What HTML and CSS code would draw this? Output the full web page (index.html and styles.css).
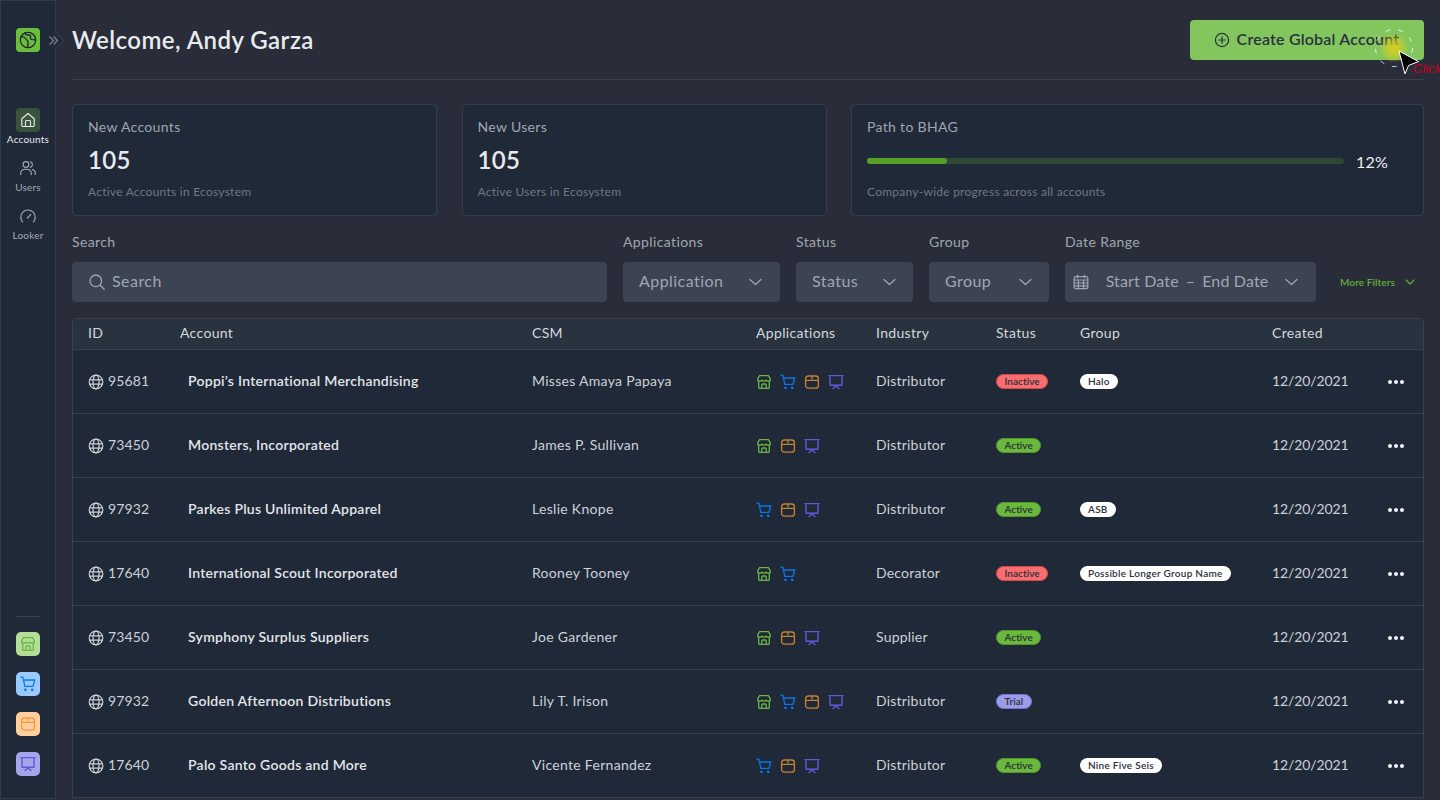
FILE: index.html
```html
<!DOCTYPE html>
<html lang="en">
<head>
<meta charset="utf-8">
<title>Accounts</title>
<link rel="stylesheet" href="styles.css">
</head>
<body>
<svg class="defs" width="0" height="0" aria-hidden="true">
  <defs>
    <symbol id="store" viewBox="0 0 16 16" fill="none" stroke="currentColor" stroke-width="1.3" stroke-linejoin="round" stroke-linecap="round">
      <path d="M3.5 1.6h9l2 3.6c0 1.3-1 2-2.2 2-.9 0-1.7-.4-2.1-1.1-.4.7-1.2 1.1-2.2 1.1s-1.800-.4-2.200-1.100C5.400 6.800 4.600 7.200 3.700 7.200 2.500 7.200 1.500 6.500 1.500 5.200z"/>
      <path d="M2.700 7.200v6.200c0 .6.400 1 1 1h8.600c.6 0 1-.4 1-1V7.200"/>
      <path d="M5.800 14.400v-3.400c0-.6.400-1 1-1h2.400c.6 0 1 .4 1 1v3.400"/>
    </symbol>
    <symbol id="cart" viewBox="0 0 16 16" fill="none" stroke="currentColor" stroke-width="1.3" stroke-linejoin="round" stroke-linecap="round">
      <path d="M.8 1.200h2l2.100 9.200h8.100l1.800-6.400H3.500"/>
      <circle cx="5.400" cy="13.800" r=".7" fill="currentColor"/>
      <circle cx="12.200" cy="13.800" r=".7" fill="currentColor"/>
    </symbol>
    <symbol id="box" viewBox="0 0 16 16" fill="none" stroke="currentColor" stroke-width="1.300" stroke-linejoin="round" stroke-linecap="round">
      <rect x="1.600" y="2" width="12.800" height="12.200" rx="2.800"/>
      <path d="M1.600 6.400h12.800M8 2.400v2.400" />
    </symbol>
    <symbol id="board" viewBox="0 0 16 16" fill="none" stroke="currentColor" stroke-width="1.400" stroke-linejoin="round" stroke-linecap="round">
      <path d="M1 1.600h14M2 1.600v9.600h12V1.600"/>
      <path d="M8 11.200v1M8 12.200l-3 2.200M8 12.200l3 2.200"/>
    </symbol>
    <symbol id="globe" viewBox="0 0 16 16" fill="none" stroke="currentColor" stroke-width="1.200">
      <circle cx="8" cy="8" r="6.800"/>
      <ellipse cx="8" cy="8" rx="3" ry="6.800"/>
      <path d="M1.400 5.800h13.200M1.400 10.200h13.200"/>
    </symbol>
  </defs>
</svg>

<div class="app">
  <aside class="sidebar">
    <div class="logo">
      <svg viewBox="0 0 24 24" width="20" height="20" fill="none" stroke="#1f2937" stroke-width="1.600" stroke-linejoin="round" stroke-linecap="round">
        <circle cx="12" cy="12" r="9.200"/>
        <path d="M3.800 8c2.400-.3 4.200.6 5.200 2.200s2.800 1.800 3 3.800-.4 3.500 0 7.200"/>
        <path d="M8.500 3.600c.4 1.800 2 2.600 3.800 2.400s2.700.2 2.900 1.600-1 2-.2 3 2 1 5.800 1.200"/>
      </svg>
    </div>
    <nav class="nav">
      <a class="nav-item is-active">
        <span class="nav-icon">
          <svg viewBox="0 0 16 16" width="16" height="16" fill="none" stroke="currentColor" stroke-width="1.200" stroke-linejoin="round"><path d="M1.800 6.800 8 1.500l6.200 5.300v6.500c0 .7-.5 1.200-1.200 1.200H3c-.7 0-1.200-.5-1.200-1.200z"/><path d="M5.500 14.500V9.500c0-.6.400-1 1-1h3c.6 0 1 .4 1 1v5"/></svg>
        </span>
        <span class="nav-label">Accounts</span>
      </a>
      <a class="nav-item">
        <span class="nav-icon">
          <svg viewBox="0 0 16 16" width="16" height="16" fill="none" stroke="currentColor" stroke-width="1.100" stroke-linecap="round"><circle cx="6" cy="4.500" r="2.900"/><path d="M.8 14.500v-1.500c0-2.300 2-3.800 5.200-3.800s5.200 1.500 5.200 3.800v1.500M10.300 1.800c1.300.3 2.100 1.400 2.100 2.700s-.8 2.400-2.100 2.700M12.500 9.500c1.700.5 2.700 1.800 2.700 3.500v1.500"/></svg>
        </span>
        <span class="nav-label">Users</span>
      </a>
      <a class="nav-item">
        <span class="nav-icon">
          <svg viewBox="0 0 16 16" width="16" height="16" fill="none" stroke="currentColor" stroke-width="1.200" stroke-linecap="round"><path d="M2.600 13.800C1.400 12.500.8 10.900.8 9.200A7.200 7.200 0 0 1 8 2a7.200 7.200 0 0 1 7.200 7.200c0 1.700-.6 3.300-1.800 4.600"/><path d="M7.400 10 10.800 6.400"/></svg>
        </span>
        <span class="nav-label">Looker</span>
      </a>
    </nav>
    <div class="side-apps">
      <span class="app-tile tile-green"><svg width="16" height="16"><use href="#store"/></svg></span>
      <span class="app-tile tile-blue"><svg width="16" height="16"><use href="#cart"/></svg></span>
      <span class="app-tile tile-orange"><svg width="16" height="16"><use href="#box"/></svg></span>
      <span class="app-tile tile-purple"><svg width="16" height="16"><use href="#board"/></svg></span>
    </div>
    <svg class="collapse" width="18" height="18" viewBox="0 0 18 18" fill="none">
      <path d="M7.500 0 15.500 8.500 7.500 17" fill="#1f2937" stroke="#39414f"/>
      <path d="M1.500 4.500 5.500 8.500 1.500 12.500M5.500 4.500 9.500 8.500 5.500 12.500" stroke="#76808f" stroke-width="1.300"/>
    </svg>
  </aside>

  <main class="main">
    <header class="topbar">
      <h1 class="title">Welcome, Andy Garza</h1>
      <button class="create-btn" type="button">
        <svg width="16" height="16" viewBox="0 0 16 16" fill="none" stroke="currentColor" stroke-width="1.200" stroke-linecap="round"><circle cx="8" cy="8" r="6.600"/><path d="M8 4.800v6.400M4.800 8h6.400"/></svg>
        Create Global Account
      </button>
    </header>

    <section class="stats">
      <div class="card">
        <div class="card-title">New Accounts</div>
        <div class="card-num">105</div>
        <div class="card-sub">Active Accounts in Ecosystem</div>
      </div>
      <div class="card">
        <div class="card-title">New Users</div>
        <div class="card-num">105</div>
        <div class="card-sub">Active Users in Ecosystem</div>
      </div>
      <div class="card">
        <div class="card-title">Path to BHAG</div>
        <div class="progress-row">
          <div class="progress"><div class="progress-fill"></div></div>
          <span class="progress-val">12%</span>
        </div>
        <div class="card-sub">Company-wide progress across all accounts</div>
      </div>
    </section>

    <section class="filters">
      <div class="field field-search">
        <label class="field-label">Search</label>
        <div class="control">
          <svg class="search-ic" width="18" height="18" viewBox="0 0 18 18" fill="none" stroke="currentColor" stroke-width="1.300" stroke-linecap="round"><circle cx="7.800" cy="7.800" r="5.800"/><path d="m12.200 12.200 4 4"/></svg>
          <span>Search</span>
        </div>
      </div>
      <div class="field field-app">
        <label class="field-label">Applications</label>
        <div class="control between"><span>Application</span><svg class="chev" width="14" height="14" viewBox="0 0 14 14" fill="none" stroke="currentColor" stroke-width="1.300" stroke-linecap="round" stroke-linejoin="round"><path d="m1 4.500 5.500 5 5.500-5"/></svg></div>
      </div>
      <div class="field field-status">
        <label class="field-label">Status</label>
        <div class="control between"><span>Status</span><svg class="chev" width="14" height="14" viewBox="0 0 14 14" fill="none" stroke="currentColor" stroke-width="1.300" stroke-linecap="round" stroke-linejoin="round"><path d="m1 4.500 5.500 5 5.500-5"/></svg></div>
      </div>
      <div class="field field-group">
        <label class="field-label">Group</label>
        <div class="control between"><span>Group</span><svg class="chev" width="14" height="14" viewBox="0 0 14 14" fill="none" stroke="currentColor" stroke-width="1.300" stroke-linecap="round" stroke-linejoin="round"><path d="m1 4.500 5.500 5 5.500-5"/></svg></div>
      </div>
      <div class="field field-date">
        <label class="field-label">Date Range</label>
        <div class="control between">
          <svg width="16" height="16" viewBox="0 0 16 16" fill="none" stroke="currentColor" stroke-width="1.200" stroke-linecap="round"><rect x="1.200" y="2.600" width="13.600" height="12" rx="1.600"/><path d="M1.200 6h13.600M4.600 1v2.800M11.400 1v2.800M1.200 9h13.600M1.200 11.800h13.600M5.400 6v8.600M10.600 6v8.600"/></svg>
          <span class="date-text">Start Date<i class="dash">–</i>End Date</span>
          <svg class="chev" width="14" height="14" viewBox="0 0 14 14" fill="none" stroke="currentColor" stroke-width="1.300" stroke-linecap="round" stroke-linejoin="round"><path d="m1 4.500 5.500 5 5.500-5"/></svg>
        </div>
      </div>
      <div class="more">More Filters
        <svg width="10" height="10" viewBox="0 0 10 10" fill="none" stroke="currentColor" stroke-width="1.100" stroke-linecap="round" stroke-linejoin="round"><path d="m1 3 4 4 4-4"/></svg>
      </div>
    </section>

    <section class="table">
      <div class="row head">
        <div>ID</div><div>Account</div><div>CSM</div><div>Applications</div><div>Industry</div><div>Status</div><div>Group</div><div>Created</div><div></div>
      </div>

      <div class="row">
        <div class="id"><svg width="16" height="16"><use href="#globe"/></svg>95681</div>
        <div class="acct">Poppi’s International Merchandising</div>
        <div>Misses Amaya Papaya</div>
        <div class="apps"><svg class="c-store"><use href="#store"/></svg><svg class="c-cart"><use href="#cart"/></svg><svg class="c-box"><use href="#box"/></svg><svg class="c-board"><use href="#board"/></svg></div>
        <div class="ind">Distributor</div>
        <div><span class="pill inactive">Inactive</span></div>
        <div><span class="tag">Halo</span></div>
        <div class="date">12/20/2021</div>
        <div class="dots"><i></i><i></i><i></i></div>
      </div>

      <div class="row">
        <div class="id"><svg width="16" height="16"><use href="#globe"/></svg>73450</div>
        <div class="acct">Monsters, Incorporated</div>
        <div>James P. Sullivan</div>
        <div class="apps"><svg class="c-store"><use href="#store"/></svg><svg class="c-box"><use href="#box"/></svg><svg class="c-board"><use href="#board"/></svg></div>
        <div class="ind">Distributor</div>
        <div><span class="pill active">Active</span></div>
        <div></div>
        <div class="date">12/20/2021</div>
        <div class="dots"><i></i><i></i><i></i></div>
      </div>

      <div class="row">
        <div class="id"><svg width="16" height="16"><use href="#globe"/></svg>97932</div>
        <div class="acct">Parkes Plus Unlimited Apparel</div>
        <div>Leslie Knope</div>
        <div class="apps"><svg class="c-cart"><use href="#cart"/></svg><svg class="c-box"><use href="#box"/></svg><svg class="c-board"><use href="#board"/></svg></div>
        <div class="ind">Distributor</div>
        <div><span class="pill active">Active</span></div>
        <div><span class="tag">ASB</span></div>
        <div class="date">12/20/2021</div>
        <div class="dots"><i></i><i></i><i></i></div>
      </div>

      <div class="row">
        <div class="id"><svg width="16" height="16"><use href="#globe"/></svg>17640</div>
        <div class="acct">International Scout Incorporated</div>
        <div>Rooney Tooney</div>
        <div class="apps"><svg class="c-store"><use href="#store"/></svg><svg class="c-cart"><use href="#cart"/></svg></div>
        <div class="ind">Decorator</div>
        <div><span class="pill inactive">Inactive</span></div>
        <div><span class="tag">Possible Longer Group Name</span></div>
        <div class="date">12/20/2021</div>
        <div class="dots"><i></i><i></i><i></i></div>
      </div>

      <div class="row">
        <div class="id"><svg width="16" height="16"><use href="#globe"/></svg>73450</div>
        <div class="acct">Symphony Surplus Suppliers</div>
        <div>Joe Gardener</div>
        <div class="apps"><svg class="c-store"><use href="#store"/></svg><svg class="c-box"><use href="#box"/></svg><svg class="c-board"><use href="#board"/></svg></div>
        <div class="ind">Supplier</div>
        <div><span class="pill active">Active</span></div>
        <div></div>
        <div class="date">12/20/2021</div>
        <div class="dots"><i></i><i></i><i></i></div>
      </div>

      <div class="row">
        <div class="id"><svg width="16" height="16"><use href="#globe"/></svg>97932</div>
        <div class="acct">Golden Afternoon Distributions</div>
        <div>Lily T. Irison</div>
        <div class="apps"><svg class="c-store"><use href="#store"/></svg><svg class="c-cart"><use href="#cart"/></svg><svg class="c-box"><use href="#box"/></svg><svg class="c-board"><use href="#board"/></svg></div>
        <div class="ind">Distributor</div>
        <div><span class="pill trial">Trial</span></div>
        <div></div>
        <div class="date">12/20/2021</div>
        <div class="dots"><i></i><i></i><i></i></div>
      </div>

      <div class="row">
        <div class="id"><svg width="16" height="16"><use href="#globe"/></svg>17640</div>
        <div class="acct">Palo Santo Goods and More</div>
        <div>Vicente Fernandez</div>
        <div class="apps"><svg class="c-cart"><use href="#cart"/></svg><svg class="c-box"><use href="#box"/></svg><svg class="c-board"><use href="#board"/></svg></div>
        <div class="ind">Distributor</div>
        <div><span class="pill active">Active</span></div>
        <div><span class="tag">Nine Five Seis</span></div>
        <div class="date">12/20/2021</div>
        <div class="dots"><i></i><i></i><i></i></div>
      </div>
    </section>
  </main>

  <div class="click-mark">
    <svg class="halo" width="40" height="40" viewBox="0 0 40 40" fill="none">
      <defs><radialGradient id="glow"><stop offset="0" stop-color="#dccf1e" stop-opacity=".95"/><stop offset=".5" stop-color="#dccf1e" stop-opacity=".6"/><stop offset="1" stop-color="#dccf1e" stop-opacity="0"/></radialGradient></defs>
      <circle cx="20" cy="20" r="15" fill="url(#glow)"/>
      <circle cx="20" cy="20" r="18.500" stroke="#fff" stroke-opacity=".75" stroke-dasharray="5 8"/>
    </svg>
    <svg class="arrow" width="24" height="28" viewBox="0 0 24 28"><path d="M2 1 8 24l3.500-8.500L21.500 11.500z" fill="#000" stroke="#fff" stroke-width="1"/></svg>
    <span class="click-text">Click</span>
  </div>
</div>
</body>
</html>
```

FILE: styles.css
```css
* { box-sizing: border-box; }
html, body { margin: 0; height: 100%; }
body {
  width: 1440px;
  height: 800px;
  overflow: hidden;
  background: #282d39;
  color: #d4d8de;
  font-family: "Lato", "Liberation Sans", sans-serif;
  font-size: 14px;
}
.defs { position: absolute; }
.app { display: flex; position: relative; height: 800px; overflow: hidden; }

/* sidebar */
.sidebar {
  position: relative;
  flex: 0 0 56px;
  height: 799px;
  background: #1f2937;
  border: 1px solid #333a48;
  display: flex;
  flex-direction: column;
  align-items: center;
  padding-top: 27px;
}
.logo {
  width: 24px; height: 24px;
  border-radius: 4px;
  background: #6cbd3c;
  display: flex; align-items: center; justify-content: center;
}
.nav { display: flex; flex-direction: column; align-items: center; margin-top: 56px; gap: 4px; }
.nav-item { display: flex; flex-direction: column; align-items: center; width: 54px; height: 44px; color: #a4abb7; }
.nav-icon { width: 24px; height: 24px; border-radius: 4px; display: flex; align-items: center; justify-content: center; }
.nav-label { font-size: 10px; line-height: 14px; letter-spacing: .2px; }
.is-active { color: #e6e8ec; }
.is-active .nav-icon { background: #39533c; }
.side-apps {
  margin-top: auto;
  margin-bottom: 22px;
  padding-top: 16px;
  display: flex; flex-direction: column; gap: 16px;
  position: relative;
}
.side-apps::before {
  content: "";
  position: absolute; top: 0; left: 0; right: 0;
  height: 1px; background: #3a4250;
}
.app-tile { width: 24px; height: 24px; border-radius: 5px; display: flex; align-items: center; justify-content: center; }
.tile-green { background: #b4dd98; color: #6db644; }
.tile-blue { background: #99c9ff; color: #0a78f0; }
.tile-orange { background: #ffcf9e; color: #f79a3e; }
.tile-purple { background: #a6a5ea; color: #5c5bd6; }
.collapse { position: absolute; left: 47px; top: 31px; overflow: visible; }

/* main */
.main { flex: 1; padding: 0 16px 0 16px; min-width: 0; }
.topbar {
  height: 80px;
  border-bottom: 1px solid #3a404c;
  display: flex; align-items: center; justify-content: space-between;
}
.title { margin: 0; font-size: 24px; font-weight: 600; color: #e9ebee; letter-spacing: .45px; }
.create-btn {
  width: 234px; height: 40px;
  border: 0; border-radius: 4px;
  background: #82c65d;
  color: #2a3040;
  font: 600 16px "Lato", sans-serif;
  letter-spacing: .2px;
  display: flex; align-items: center; justify-content: center; gap: 7px;
  padding: 0 1px 2px 0;
}
.create-btn svg { margin-top: 2px; }

.stats { display: grid; grid-template-columns: 365px 365px 1fr; column-gap: 24.5px; margin-top: 24px; }
.card {
  height: 112px;
  background: #1f2937;
  border: 1px solid #363d4a;
  border-radius: 4px;
  padding: 14px 15px 0;
}
.card-title { font-size: 14px; line-height: 16px; color: #a0a6b1; letter-spacing: .33px; }
.card-num { font-size: 24px; line-height: 28px; font-weight: 600; color: #e8eaed; margin-top: 11px; letter-spacing: .3px; }
.card-sub { font-size: 12px; line-height: 14px; color: #707884; margin-top: 11px; letter-spacing: .25px; }
.progress-row { display: flex; align-items: center; height: 28px; margin-top: 11px; padding-top: 2px; }
.progress { width: 477px; height: 6px; border-radius: 3px; background: #2f4735; }
.progress-fill { width: 80px; height: 6px; border-radius: 3px; background: #57a028; }
.progress-val { margin-left: 12px; font-size: 16px; color: #eef0f3; letter-spacing: .2px; }

.filters { display: flex; align-items: flex-end; gap: 16px; margin-top: 18px; }
.field { display: flex; flex-direction: column; }
.field-label { font-size: 14px; line-height: 17px; color: #a0a6b1; margin-bottom: 12px; margin-top: -1px; letter-spacing: .38px; }
.control {
  height: 40px;
  border-radius: 4px;
  background: #3c4352;
  color: #a0a6b1;
  font-size: 16px;
  padding: 0 16px 0;
  display: flex; align-items: center;
  letter-spacing: .45px;
}
.control span { padding-bottom: 3px; }
.between { justify-content: space-between; }
.field-search { width: 535px; }
.search-ic { margin-right: 6px; flex: none; }
.field-app { width: 157px; }
.field-app .control { padding-right: 17px; }
.field-status { width: 117px; }
.field-group { width: 120px; }
.field-date { width: 251px; }
.field-date .control { padding-left: 8px; padding-right: 17px; }
.date-text { white-space: nowrap; letter-spacing: .15px; }
.dash { font-style: normal; margin: 0 7px; }
.more {
  margin-left: 8px;
  height: 40px;
  display: flex; align-items: center; gap: 10px;
  font-size: 10px; font-weight: 600;
  color: #66b032;
  white-space: nowrap;
  letter-spacing: .1px;
}

.table {
  margin-top: 16px;
  border: 1px solid #3a404c;
  border-radius: 4px 4px 0 0;
  background: #1f2937;
}
.row {
  display: grid;
  grid-template-columns: 92px 352px 224px 120px 120px 84px 192px 108px 1fr;
  align-items: center;
  height: 64px;
  padding-left: 15px;
  border-top: 1px solid #3a404c;
  color: #cdd1d8;
  letter-spacing: .3px;
}
.row > div { padding-bottom: 2px; }
.row > .apps, .row > .dots { padding-bottom: 0; }
.head {
  height: 31px;
  border-top: 0;
  border-bottom: 1px solid #3a404c;
  background: #29323f;
  color: #d4d8de;
  letter-spacing: .33px;
}
.row.head > div { padding-bottom: 4px; }
.head + .row { border-top: 0; height: 63px; }
.id { display: flex; align-items: center; gap: 4px; letter-spacing: .1px; }
.id svg { margin-top: 2px; }
.acct { font-weight: 600; padding-left: 8px; color: #e4e6ea; letter-spacing: .27px; }
.ind { letter-spacing: .2px; }
.date { letter-spacing: -.1px; }
.apps { display: flex; gap: 8px; }
.apps svg { width: 16px; height: 16px; }
.c-store { color: #6db644; }
.c-cart { color: #0a78f0; }
.c-box { color: #c98233; }
.c-board { color: #5c5bd6; }

.pill {
  display: inline-block;
  height: 15px;
  line-height: 12px;
  padding: 0 7.5px;
  border-radius: 8px;
  border: 1.5px solid;
  font-size: 10px;
  font-weight: 600;
  color: #28303c;
  vertical-align: middle;
  letter-spacing: .05px;
}
.inactive { background: #f96d6f; border-color: #d4494c; }
.active { background: #6cb83c; border-color: #4f9a27; }
.trial { background: #9b9be8; border-color: #7574d6; }
.tag {
  display: inline-block;
  height: 15px;
  line-height: 15px;
  padding: 0 8px;
  border-radius: 8px;
  background: #fff;
  font-size: 10px;
  font-weight: 600;
  color: #28303c;
  vertical-align: middle;
  letter-spacing: .27px;
  white-space: nowrap;
}
.dots { display: flex; gap: 2px; padding-left: 8px; margin-top: 1px; }
.dots i { width: 4px; height: 4px; border-radius: 50%; background: #f2f3f5; }

/* annotation left by the screen recorder, sits over the button */
.click-mark { position: absolute; left: 1374px; top: 28px; width: 66px; height: 56px; pointer-events: none; }
.halo { position: absolute; left: 0; top: 0; }
.arrow { position: absolute; left: 23px; top: 22px; }
.click-text { position: absolute; left: 39px; top: 33px; font: italic 13px "Liberation Sans", sans-serif; color: #c8001e; }
```
